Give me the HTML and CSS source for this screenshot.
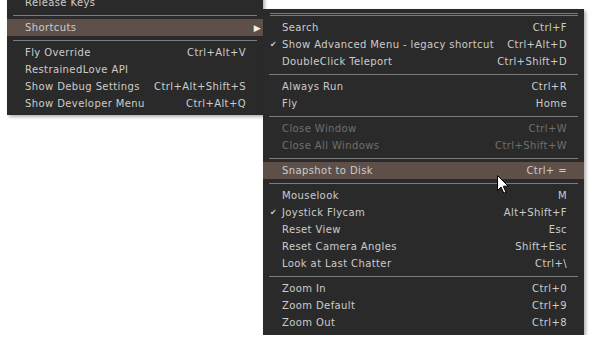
FILE: index.html
```html
<!DOCTYPE html>
<html lang="en">
<head>
  <meta charset="UTF-8" />
  <title>Menu</title>
  <link rel="stylesheet" href="styles.css">
</head>
<body>
  <div class="desk">
    <!-- main menu -->
    <div class="menu main">
      <div class="item"><span>Release Keys</span></div>
      <div class="sep"></div>
      <div class="item active"><span>Shortcuts</span><span class="arrow">&#9654;</span></div>
      <div class="sep"></div>
      <div class="item"><span>Fly Override</span><span>Ctrl+Alt+V</span></div>
      <div class="item"><span>RestrainedLove API</span></div>
      <div class="item"><span>Show Debug Settings</span><span>Ctrl+Alt+Shift+S</span></div>
      <div class="item"><span>Show Developer Menu</span><span>Ctrl+Alt+Q</span></div>
    </div>

    <!-- Shortcuts submenu -->
    <div class="menu sub">
      <div class="tear"></div>
      <div class="item"><span class="mark"></span><span class="label">Search</span><span>Ctrl+F</span></div>
      <div class="item"><span class="mark">&#10004;</span><span class="label">Show Advanced Menu - legacy shortcut</span><span>Ctrl+Alt+D</span></div>
      <div class="item"><span class="mark"></span><span class="label">DoubleClick Teleport</span><span>Ctrl+Shift+D</span></div>
      <div class="sep"></div>
      <div class="item"><span class="mark"></span><span class="label">Always Run</span><span>Ctrl+R</span></div>
      <div class="item"><span class="mark"></span><span class="label">Fly</span><span>Home</span></div>
      <div class="sep"></div>
      <div class="item disabled"><span class="mark"></span><span class="label">Close Window</span><span>Ctrl+W</span></div>
      <div class="item disabled"><span class="mark"></span><span class="label">Close All Windows</span><span>Ctrl+Shift+W</span></div>
      <div class="sep"></div>
      <div class="item active"><span class="mark"></span><span class="label">Snapshot to Disk</span><span>Ctrl+ =</span></div>
      <div class="sep"></div>
      <div class="item"><span class="mark"></span><span class="label">Mouselook</span><span>M</span></div>
      <div class="item"><span class="mark">&#10004;</span><span class="label">Joystick Flycam</span><span>Alt+Shift+F</span></div>
      <div class="item"><span class="mark"></span><span class="label">Reset View</span><span>Esc</span></div>
      <div class="item"><span class="mark"></span><span class="label">Reset Camera Angles</span><span>Shift+Esc</span></div>
      <div class="item"><span class="mark"></span><span class="label">Look at Last Chatter</span><span>Ctrl+\</span></div>
      <div class="sep"></div>
      <div class="item"><span class="mark"></span><span class="label">Zoom In</span><span>Ctrl+0</span></div>
      <div class="item"><span class="mark"></span><span class="label">Zoom Default</span><span>Ctrl+9</span></div>
      <div class="item"><span class="mark"></span><span class="label">Zoom Out</span><span>Ctrl+8</span></div>
    </div>
  </div>

  <!-- mouse pointer -->
  <svg class="cursor" width="14" height="20" viewBox="0 0 14 20">
    <path d="M0.5 0.5 L0.5 15.5 L4 12 L6.8 18.2 L9 17.2 L6.3 11.2 L11.2 11.2 Z" fill="#fff" stroke="#000" stroke-width="1" stroke-linejoin="round"/>
  </svg>
</body>
</html>
```

FILE: styles.css
```css
body {
  margin: 0;
  background: #fff;
  font-family: "DejaVu Sans", sans-serif;
  font-size: 10px;
  letter-spacing: 0.4px;
  overflow: hidden;
}
.desk {
  display: flex;
  align-items: flex-start;
  padding-left: 7px;
}
.menu {
  background: #2a2a2a;
  color: #cccccc;
  box-shadow: 2px 2px 3px rgba(0,0,0,0.3);
}
.main {
  width: 256px;
  margin-top: -6px;
  padding-bottom: 3px;
}
.sub {
  width: 321px;
  margin-top: 9px;
  padding-bottom: 4px;
}
.item {
  display: flex;
  align-items: center;
  justify-content: space-between;
  height: 17px;
  padding: 0 17px 0 18px;
  white-space: nowrap;
}
.sub .item {
  padding-left: 7px;
}
.sub .label {
  flex: 1;
}
.mark {
  width: 12px;
  font-size: 8px;
}
.active {
  background: #5e5049;
}
.disabled {
  color: #6f6f6f;
}
.arrow {
  font-size: 9px;
  color: #f0f0f0;
  margin-right: -15px;
}
/* separators */
.sep {
  height: 8px;
  display: flex;
  align-items: center;
  padding: 0 6px;
}
.sep::after {
  content: "";
  flex: 1;
  height: 1px;
  background: #7b7b7b;
}
.tear {
  height: 10px;
  padding: 4px 6px 0 7px;
  box-sizing: border-box;
}
.tear::after {
  content: "";
  display: block;
  height: 1px;
  border-top: 1px solid #7b7b7b;
  border-bottom: 1px solid #7b7b7b;
}
.cursor {
  position: absolute;
  left: 497px;
  top: 175px;
}
```
